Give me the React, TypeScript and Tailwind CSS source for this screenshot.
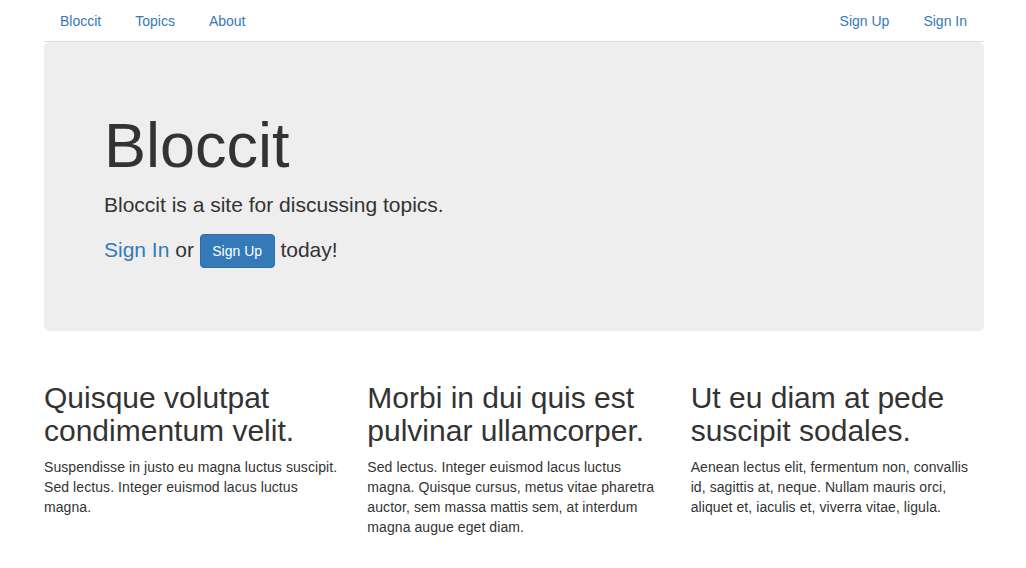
import React from "react";

const cols = [
  {
    h: "Quisque volutpat condimentum velit.",
    p: "Suspendisse in justo eu magna luctus suscipit. Sed lectus. Integer euismod lacus luctus magna.",
  },
  {
    h: "Morbi in dui quis est pulvinar ullamcorper.",
    p: "Sed lectus. Integer euismod lacus luctus magna. Quisque cursus, metus vitae pharetra auctor, sem massa mattis sem, at interdum magna augue eget diam.",
  },
  {
    h: "Ut eu diam at pede suscipit sodales.",
    p: "Aenean lectus elit, fermentum non, convallis id, sagittis at, neque. Nullam mauris orci, aliquet et, iaculis et, viverra vitae, ligula.",
  },
];

function NavLink({ children }: { children: React.ReactNode }) {
  return (
    <li className="mr-[2px] -mb-px">
      <a
        href="#"
        className="block border border-transparent px-[15px] py-[10px] leading-[20px] text-[#337ab7] rounded-t-[4px]"
      >
        {children}
      </a>
    </li>
  );
}

export default function App() {
  return (
    <div className="min-h-[568px] bg-white font-['Liberation_Sans',Arial,sans-serif] text-[14px] leading-[20px] text-[#333]">
      <div className="ml-[44px] w-[940px]">
        <div className="flex justify-between border-b border-[#ddd]">
          <ul className="flex">
            <NavLink>Bloccit</NavLink>
            <NavLink>Topics</NavLink>
            <NavLink>About</NavLink>
          </ul>
          <ul className="flex -mr-px">
            <NavLink>Sign Up</NavLink>
            <NavLink>Sign In</NavLink>
          </ul>
        </div>

        <div className="mb-[30px] rounded-[6px] bg-[#eee] px-[60px] pt-[49px] pb-[48px]">
          <h1 className="mt-[20px] mb-[10px] text-[63px] leading-[1.1] font-medium">Bloccit</h1>
          <p className="mb-[14px] text-[21px] leading-[30px]">Bloccit is a site for discussing topics.</p>
          <p className="mb-[15px] text-[21px] leading-[30px]">
            <a href="#" className="text-[#337ab7]">Sign In</a> or{" "}
            <a
              href="#"
              className="inline-block rounded-[4px] border border-[#2e6da4] bg-[#337ab7] px-[11.5px] py-[6px] align-middle text-[14px] leading-[20px] text-white"
            >
              Sign Up
            </a>{" "}
            today!
          </p>
        </div>

        <div className="grid grid-cols-3 -mx-[15px]">
          {cols.map((c) => (
            <div key={c.h} className="px-[15px]">
              <h2 className="mt-[20px] mb-[10px] text-[30px] leading-[1.1] font-medium">{c.h}</h2>
              <p className="mb-[10px] tracking-[0.08px]">{c.p}</p>
            </div>
          ))}
        </div>
      </div>
    </div>
  );
}
